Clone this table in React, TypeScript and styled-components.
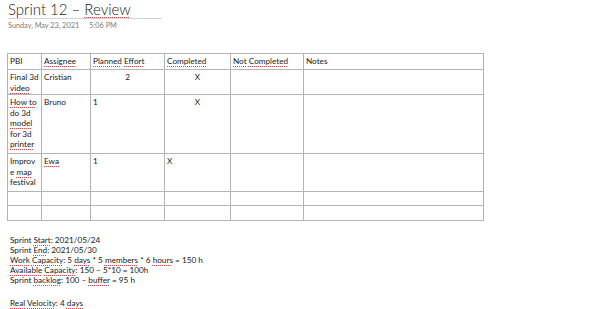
import React from "react";
import styled, { createGlobalStyle } from "styled-components";

const Global = createGlobalStyle`
  html, body { margin: 0; padding: 0; background: #ffffff; }
  body { font-family: Lato, "Open Sans", sans-serif; color: #1a1a1a; }
`;

const Page = styled.div`
  width: 600px;
  height: 309px;
  overflow: hidden;
  padding: 0 0 0 7px;
  box-sizing: border-box;
`;

const TitleBlock = styled.div`
  width: 154px;
  margin-left: 1px;
  border-bottom: 1px solid #d4d4d4;
`;

const Title = styled.h1`
  margin: 0;
  font-family: Lato, sans-serif;
  font-weight: 300;
  font-size: 15px;
  line-height: 18px;
  color: #222;
  white-space: nowrap;
`;

const DateLine = styled.div`
  margin: 2px 0 0 1px;
  font-size: 7.3px;
  line-height: 9px;
  color: #7a7a7a;
  display: flex;
  gap: 10px;
`;

const Sp = styled.span`
  text-decoration-line: underline;
  text-decoration-style: dotted;
  text-decoration-color: #e04848;
  text-decoration-thickness: 1px;
  text-underline-offset: 1.5px;
`;

const Table = styled.table`
  margin-top: 23px;
  border-collapse: collapse;
  table-layout: fixed;
  width: 477px;
  font-size: 8.2px;
  line-height: 10.5px;
  color: #1a1a1a;
`;

const Cell = styled.td<{ $align?: string }>`
  border: 1px solid #b4b4b4;
  padding: 2px 2px 0 2px;
  vertical-align: top;
  text-align: ${(p) => p.$align || "left"};
  overflow: hidden;
  white-space: nowrap;
`;

const Row = styled.tr<{ $h: number }>`
  height: ${(p) => p.$h}px;
`;

const Notes = styled.div`
  margin: 14px 0 0 3px;
  font-size: 8.2px;
  line-height: 10px;
  color: #1a1a1a;
`;

const Gap = styled.div`
  height: 13px;
`;

const widths = [34, 49, 74, 66, 73, 180];

export default function App() {
  return (
    <Page>
      <Global />
      <TitleBlock>
        <Title>
          Sprint 12 – <Sp>Review</Sp>
        </Title>
      </TitleBlock>
      <DateLine>
        <span>Sunday, May 23, 2021</span>
        <span>5:06 PM</span>
      </DateLine>
      <Table>
        <colgroup>
          {widths.map((w, i) => (
            <col key={i} style={{ width: w }} />
          ))}
        </colgroup>
        <tbody>
          <Row $h={16}>
            <Cell>PBI</Cell>
            <Cell><Sp>Assignee</Sp></Cell>
            <Cell><Sp>Planned</Sp> <Sp>Effort</Sp></Cell>
            <Cell><Sp>Completed</Sp></Cell>
            <Cell><Sp>Not</Sp> <Sp>Completed</Sp></Cell>
            <Cell>Notes</Cell>
          </Row>
          <Row $h={25}>
            <Cell>Final 3d<br /><Sp>video</Sp></Cell>
            <Cell>Cristian</Cell>
            <Cell $align="center">2</Cell>
            <Cell $align="center">X</Cell>
            <Cell />
            <Cell />
          </Row>
          <Row $h={59}>
            <Cell><Sp>How to</Sp><br />do 3d<br /><Sp>model</Sp><br />for 3d<br /><Sp>printer</Sp></Cell>
            <Cell>Bruno</Cell>
            <Cell>1</Cell>
            <Cell $align="center">X</Cell>
            <Cell />
            <Cell />
          </Row>
          <Row $h={38}>
            <Cell>Improv<br />e <Sp>map</Sp><br />festival</Cell>
            <Cell><Sp>Ewa</Sp></Cell>
            <Cell>1</Cell>
            <Cell>X</Cell>
            <Cell />
            <Cell />
          </Row>
          <Row $h={14}>
            <Cell /><Cell /><Cell /><Cell /><Cell /><Cell />
          </Row>
          <Row $h={15}>
            <Cell /><Cell /><Cell /><Cell /><Cell /><Cell />
          </Row>
        </tbody>
      </Table>
      <Notes>
        <div>Sprint <Sp>Start</Sp>: 2021/05/24</div>
        <div>Sprint <Sp>End</Sp>: 2021/05/30</div>
        <div><Sp>Work</Sp> <Sp>Capacity</Sp>: 5 <Sp>days</Sp> * 5 <Sp>members</Sp> * 6 <Sp>hours</Sp> = 150 h</div>
        <div><Sp>Available</Sp> <Sp>Capacity</Sp>: 150 – 5*10 = 100h</div>
        <div>Sprint <Sp>backlog</Sp>: 100 – <Sp>buffer</Sp> = 95 h</div>
        <Gap />
        <div><Sp>Real</Sp> <Sp>Velocity</Sp>: 4 <Sp>days</Sp></div>
      </Notes>
    </Page>
  );
}
